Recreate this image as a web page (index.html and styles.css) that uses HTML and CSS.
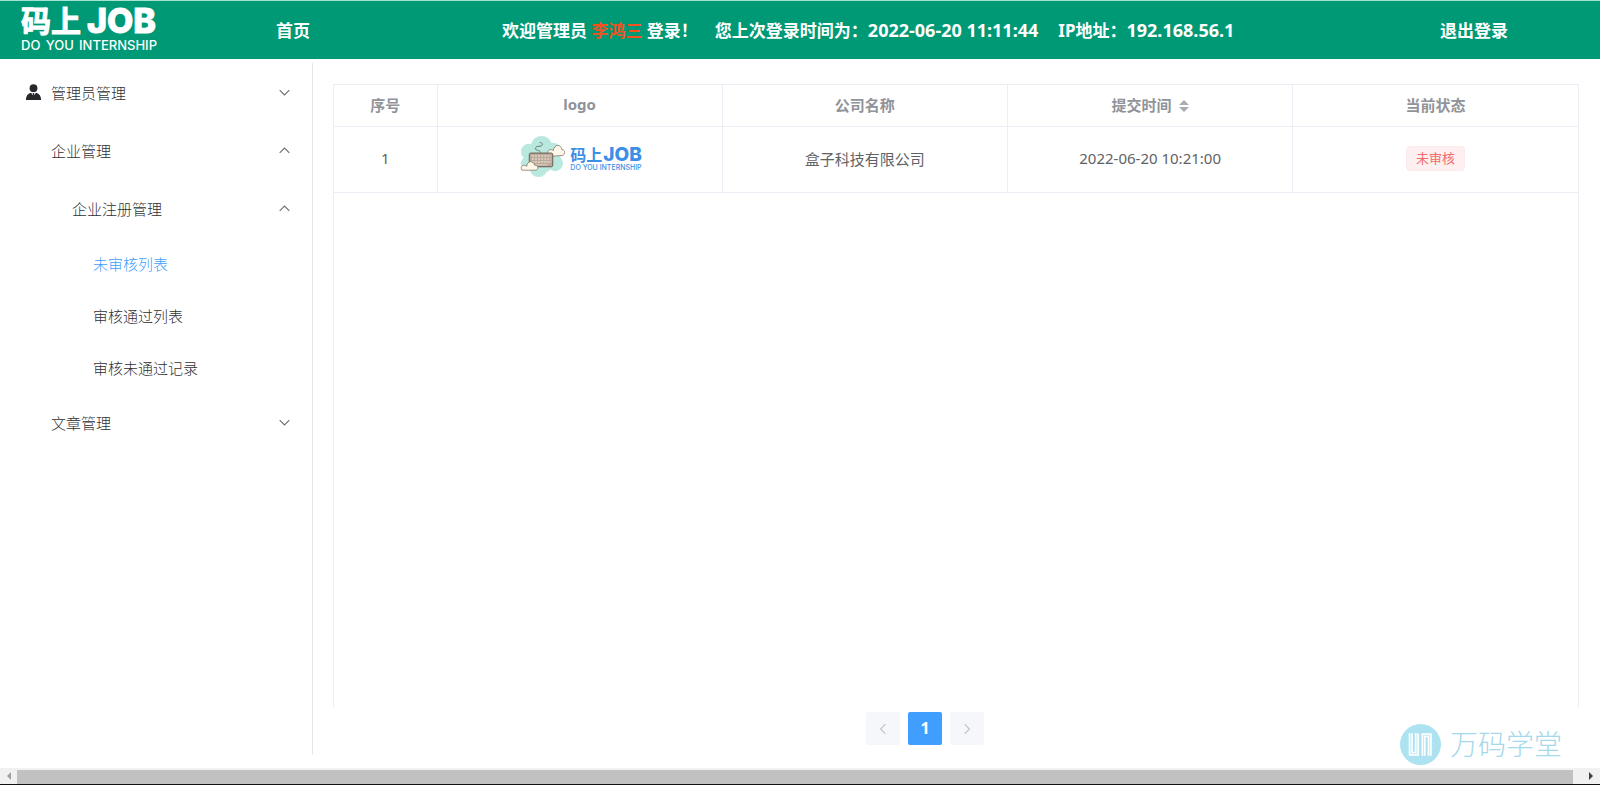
FILE: index.html
```html
<!DOCTYPE html>
<html lang="zh-CN">
<head>
<meta charset="utf-8">
<title>码上JOB</title>
<link rel="stylesheet" href="styles.css">
</head>
<body>
<header class="topbar">
  <a class="brand" href="#"><span class="brand-name"><span>码上</span><span class="brand-job">JOB</span></span><span class="brand-sub"><span>DO</span> <span>YOU</span> <span>INTERNSHIP</span></span></a>
  <a class="toplink home" href="#">首页</a>
  <div class="welcome">
    <span>欢迎管理员 <span class="admin">李鸿三</span> 登录！</span>
    <span class="login-time">您上次登录时间为：<span class="num">2022-06-20 11:11:44</span></span>
    <span>IP地址：<span class="num">192.168.56.1</span></span>
  </div>
  <a class="toplink logout" href="#">退出登录</a>
</header>
<div class="body">
  <nav class="sidebar">
    <button class="item"><svg class="user" viewBox="0 0 16 16"><circle cx="8" cy="4.2" r="3.9"/><path d="M.4 16c0-4 1.600-6.200 5.100-7.300L8 12l2.500-3.300c3.500 1.100 5.100 3.300 5.100 7.300z"/><path d="M7 9h2l-.5 1.300L9 13l-1 1.500L7 13l.5-2.700z"/></svg><span>管理员管理</span><svg class="arrow" viewBox="0 0 10 10"><path d="M.6 2.800 5 7.200 9.400 2.800"/></svg></button>
    <button class="item plain"><span>企业管理</span><svg class="arrow" viewBox="0 0 10 10"><path d="M.6 7.200 5 2.800 9.400 7.200"/></svg></button>
    <button class="item nested"><span>企业注册管理</span><svg class="arrow" viewBox="0 0 10 10"><path d="M.6 7.200 5 2.800 9.400 7.200"/></svg></button>
    <a class="leaf active" href="#">未审核列表</a>
    <a class="leaf" href="#">审核通过列表</a>
    <a class="leaf" href="#">审核未通过记录</a>
    <button class="item plain"><span>文章管理</span><svg class="arrow" viewBox="0 0 10 10"><path d="M.6 2.800 5 7.200 9.400 2.800"/></svg></button>
  </nav>
  <main class="content">
    <div class="table-box">
      <table>
        <colgroup><col class="col-index"><col><col><col><col></colgroup>
        <thead><tr><th>序号</th><th>logo</th><th>公司名称</th><th>提交时间<svg class="sort" viewBox="0 0 10 12"><path d="M0 5 5 0l5 5zM0 7h10l-5 5z"/></svg></th><th>当前状态</th></tr></thead>
        <tbody><tr>
          <td>1</td>
          <td>
            <div class="company-logo">
              <svg class="cloud" viewBox="0 0 50 44">
                <g fill="#b9e8df"><circle cx="25" cy="12" r="11"/><circle cx="12" cy="17" r="8"/><circle cx="37" cy="17" r="9"/><circle cx="22" cy="34" r="9"/><circle cx="39" cy="29" r="8"/><circle cx="11" cy="29" r="7"/><circle cx="25" cy="25" r="14"/></g>
                <path d="M24 18c-1-4-6-1-5-5 1-3 6 0 7-3 0-2-2-3-3-2" fill="none" stroke="#66786f"/>
                <path d="M31 19c0-4 4-5 6-3 1-7 8-7 9-1 4 0 3 6 0 6l-14 1z" fill="#fff8e9" stroke="#82766b" stroke-width=".8"/>
                <rect x="12.500" y="18.500" width="24" height="14" rx="1.500" fill="#bba99a" stroke="#66594f"/>
                <path d="M15 21.500h20M15 24.500h20M15 27.500h20" stroke="#e0d2c5" stroke-width="1.600" stroke-dasharray="2.200 1"/>
                <path d="M18 30.500h13" stroke="#e0d2c5"/>
                <path d="M5 36c-3-5 3-6 5-4 0-6 7-6 8-1 3-1 5 4 1 5z" fill="#fff8e9" stroke="#82766b" stroke-width=".8"/>
              </svg>
              <span class="mini"><span class="mini-name"><span>码上</span><span class="mini-job">JOB</span></span><span class="mini-sub">DO YOU INTERNSHIP</span></span>
            </div>
          </td>
          <td>盒子科技有限公司</td><td>2022-06-20 10:21:00</td><td><span class="tag">未审核</span></td>
        </tr></tbody>
      </table>
    </div>
    <div class="pager">
      <button aria-label="上一页" disabled><svg viewBox="0 0 10 10"><path d="M7 1 3 5l4 4"/></svg></button>
      <button class="current">1</button>
      <button aria-label="下一页" disabled><svg viewBox="0 0 10 10"><path d="m3 1 4 4-4 4"/></svg></button>
    </div>
  </main>
</div>
<div class="scrollbar"><svg viewBox="0 0 6 10"><path d="M5 1v8L1 5z" fill="#a0a0a0"/></svg><div class="thumb"></div><svg viewBox="0 0 6 10"><path d="M1 1v8l4-4z" fill="#404040"/></svg></div>
<div class="watermark">
  <svg viewBox="0 0 40 40"><circle cx="20" cy="20" r="20" fill="#ade3f1"/><path d="M8.500 9h4v18h2V9h4v22h-10zM21 9h10v22h-4V13h-2v18h-4z" fill="#fff"/><path d="M10.500 9v20h6V9M23 31V11h6v20" fill="none" stroke="#ade3f1" stroke-width=".7"/></svg>
  <span>万码学堂</span>
</div>
</body>
</html>
```
FILE: styles.css
```css
* { box-sizing: border-box; }
body {
  margin: 0;
  height: 100vh;
  display: flex;
  flex-direction: column;
  font-family: "Noto Sans", "Noto Sans CJK SC", sans-serif;
  font-size: 15px;
  color: #303133;
  background: #fff;
}
a { color: inherit; text-decoration: none; }
button { font: inherit; color: inherit; border: 0; background: none; padding: 0; cursor: pointer; }

.topbar {
  display: flex;
  align-items: center;
  height: 59px;
  flex: none;
  padding: 0 92px 2px 21px;
  border-top: 1px solid #a5e2d2;
  background: #009975;
  color: #fff;
  font-size: 17px;
  font-weight: 700;
  white-space: nowrap;
}
.brand { width: 255px; padding-top: 2px; display: flex; flex-direction: column; }
.brand-name { display: flex; align-items: center; font-size: 30px; line-height: 30px; font-weight: 700; -webkit-text-stroke: 1px #fff; }
.brand-job { font-family: Inter, sans-serif; font-size: 34px; font-weight: 800; margin-left: 6px; }
.brand-sub { display: flex; justify-content: space-between; width: 136px; font-family: Inter, sans-serif; font-size: 13px; line-height: 18px; font-weight: 500; }
.home { width: 226px; }
.welcome { flex: 1; display: flex; }
.login-time { margin: 0 20px 0 17px; }
.admin { color: #f4511e; }
.num { font-size: 18px; }

.body { flex: 1; display: flex; min-height: 0; }
.sidebar { width: 313px; margin: 4px 0 13px; border-right: 1px solid #e6e6e6; flex: none; font-weight: 300; }
.item { display: flex; align-items: center; width: 100%; height: 58px; padding: 0 22px 0 25px; }
.user { width: 17px; height: 16px; margin-right: 9px; fill: #26282b; }
.plain { padding-left: 51px; }
.nested { padding-left: 72px; }
.arrow { width: 11px; height: 11px; margin-left: auto; fill: none; stroke: #6a6d72; }
.leaf { display: flex; align-items: center; height: 52px; padding-left: 93px; }
.active { color: #409eff; }

.content { flex: 1; display: flex; flex-direction: column; padding: 25px 21px 23px 20px; min-width: 0; }
.table-box { flex: 1; border: 1px solid #ebeef5; border-bottom: 0; }
table { width: 100%; table-layout: fixed; border-collapse: collapse; color: #606266; text-align: center; }
.col-index { width: 103px; }
th, td { padding: 0 0 2px; border-bottom: 1px solid #ebeef5; border-right: 1px solid #ebeef5; }
th:last-child, td:last-child { border-right: 0; }
th { height: 41px; color: #909399; font-weight: 700; }
td { height: 66px; }
.sort { width: 10px; height: 12px; margin-left: 7px; fill: #a8abb2; vertical-align: -1px; }
.company-logo { display: flex; justify-content: center; align-items: center; gap: 4px; padding-bottom: 4px; }
.cloud { width: 49px; height: 43px; }
.mini { display: flex; flex-direction: column; color: #3d8fe6; text-align: left; padding-top: 7px; }
.mini-name { display: flex; align-items: center; font-size: 16px; line-height: 16px; font-weight: 700; }
.mini-job { font-family: Inter, sans-serif; font-size: 19px; font-weight: 800; margin-left: 1px; }
.mini-sub { font-family: Inter, sans-serif; font-size: 7px; line-height: 10px; font-weight: 500; }
.tag {
  display: inline-block;
  padding: 0 9px;
  border: 1px solid #fdeaea;
  border-radius: 4px;
  background: #fef0f0;
  color: #f56c6c;
  font-size: 13px;
  line-height: 23px;
}
.pager { display: flex; justify-content: center; gap: 8px; padding: 5px 62px 0 0; }
.pager button { width: 34px; height: 33px; border-radius: 2px; background: #f5f7fa; display: grid; place-items: center; }
.pager svg { width: 12px; height: 12px; fill: none; stroke: #c0c4cc; stroke-width: 1; }
.pager .current { background: #409eff; color: #fff; font-size: 16px; font-weight: 700; padding-bottom: 2px; }

.scrollbar { display: flex; align-items: center; height: 17px; flex: none; background: #f1f1f1; border-bottom: 1px solid #111; }
.scrollbar svg { width: 6px; height: 10px; margin: 0 6px; }
.thumb { flex: 1; margin-right: 9px; height: 14px; background: #c1c1c1; align-self: flex-end; }
.scrollbar svg:first-child { margin-right: 5px; }
.watermark { position: absolute; right: 38px; bottom: 20px; display: flex; align-items: center; gap: 9px; color: #a5d9ea; font-size: 28px; line-height: 41px; font-weight: 300; }
.watermark svg { width: 41px; height: 41px; }
```
